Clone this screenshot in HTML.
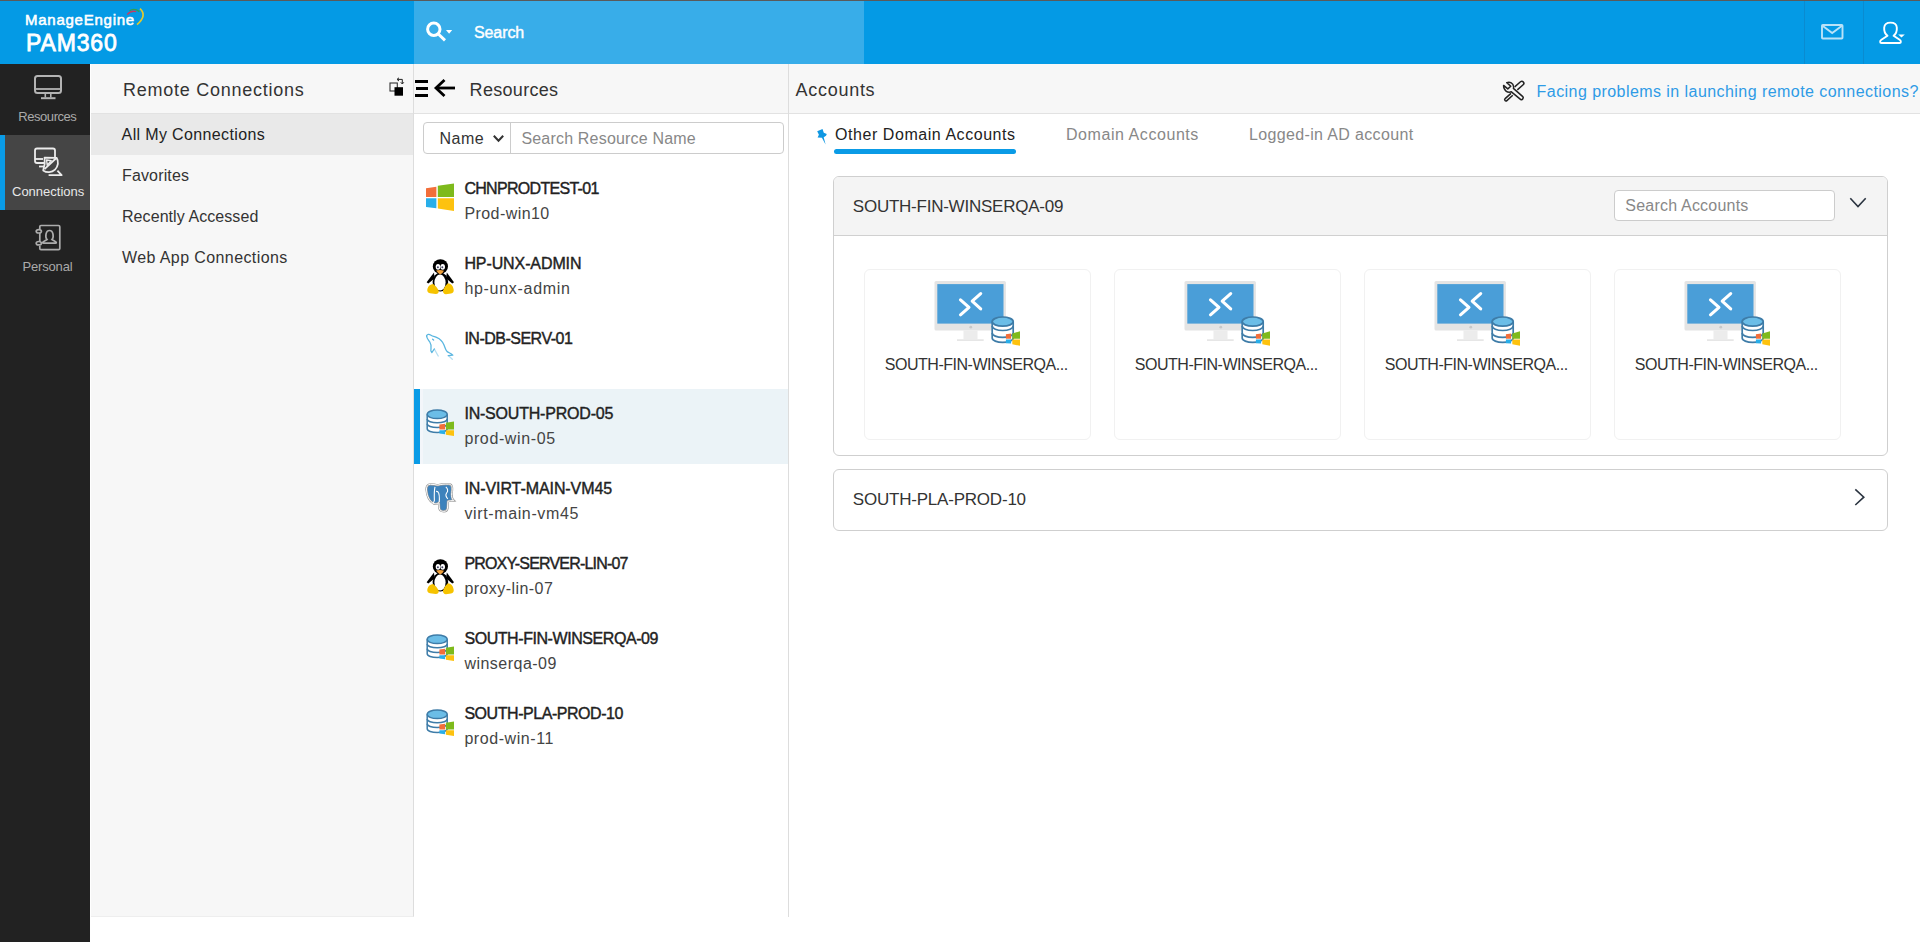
<!DOCTYPE html>
<html><head><meta charset="utf-8">
<style>
*{margin:0;padding:0;box-sizing:border-box}
html,body{width:1920px;height:942px;overflow:hidden;background:#fff;font-family:"Liberation Sans",sans-serif}
.a{position:absolute}
.t{position:absolute;white-space:nowrap;line-height:1;color:#333}
.sb{-webkit-text-stroke:0.4px currentColor}
svg{position:absolute;overflow:visible}
</style></head><body>
<!-- top line + header -->
<div class="a" style="left:0;top:0;width:1920px;height:1px;background:#5a5a5a"></div>
<div class="a" style="left:0;top:1px;width:1920px;height:63px;background:#049ae5"></div>
<div class="a" style="left:414px;top:1px;width:450px;height:63px;background:#38ade9"></div>
<div class="a" style="left:1804px;top:1px;width:1px;height:63px;background:#0a8bd0"></div>
<div class="a" style="left:1863px;top:1px;width:1px;height:63px;background:#0a8bd0"></div>
<div class="t" style="left:25px;top:12px;font-size:15px;color:#fff;letter-spacing:0.75px;-webkit-text-stroke:0.55px #fff">ManageEngine</div>
<div class="t" style="left:26px;top:31.5px;font-size:23px;color:#fff;letter-spacing:0.85px;-webkit-text-stroke:0.8px #fff">PAM360</div>
<div class="t sb" style="left:474px;top:25.2px;font-size:16px;color:#fff;letter-spacing:-0.1px">Search</div>

<!-- sidebar -->
<div class="a" style="left:0;top:64px;width:90px;height:878px;background:#222"></div>
<div class="a" style="left:0;top:135px;width:90px;height:75px;background:#454545"></div>
<div class="a" style="left:0;top:135px;width:5px;height:75px;background:#0a9be6"></div>
<div class="t" style="left:18.3px;top:110px;font-size:13px;color:#aaa;letter-spacing:-0.45px">Resources</div>
<div class="t" style="left:12px;top:185px;font-size:13px;color:#e8e8e8;letter-spacing:0px">Connections</div>
<div class="t" style="left:22.6px;top:259.7px;font-size:13px;color:#aaa;letter-spacing:-0.19px">Personal</div>

<!-- left nav panel -->
<div class="a" style="left:91px;top:64px;width:323px;height:853px;background:#f7f7f7;border-right:1px solid #ddd;border-bottom:1px solid #eee"></div>
<div class="a" style="left:91px;top:113px;width:322px;height:1px;background:#e2e2e2"></div>
<div class="a" style="left:91px;top:114px;width:322px;height:41px;background:#e9e9e9"></div>
<div class="t" style="left:123px;top:80.6px;font-size:18px;letter-spacing:0.74px">Remote Connections</div>
<div class="t" style="left:121.6px;top:127.2px;font-size:16px;color:#222;letter-spacing:0.36px">All My Connections</div>
<div class="t" style="left:122px;top:168.2px;font-size:16px;letter-spacing:0.15px">Favorites</div>
<div class="t" style="left:122px;top:209.2px;font-size:16px;letter-spacing:0.07px">Recently Accessed</div>
<div class="t" style="left:122px;top:249.9px;font-size:16px;letter-spacing:0.4px">Web App Connections</div>

<!-- resources panel -->
<div class="a" style="left:414px;top:64px;width:375px;height:853px;background:#fff;border-right:1px solid #ddd"></div>
<div class="a" style="left:414px;top:64px;width:374px;height:50px;background:#f7f7f7;border-bottom:1px solid #e2e2e2"></div>
<div class="t" style="left:469.6px;top:80.5px;font-size:18px;letter-spacing:0.31px">Resources</div>
<div class="a" style="left:423px;top:122px;width:361px;height:32px;border:1px solid #ccc;border-radius:4px;background:#fff"></div>
<div class="a" style="left:510px;top:123px;width:1px;height:30px;background:#ccc"></div>
<div class="t" style="left:439.4px;top:130.9px;font-size:16px;letter-spacing:0.54px">Name</div>
<div class="t" style="left:521.4px;top:130.9px;font-size:16px;color:#888;letter-spacing:0.19px">Search Resource Name</div>

<div class="a" style="left:414px;top:389px;width:374px;height:75px;background:#ebf3f7"></div>
<div class="a" style="left:420px;top:389px;width:3px;height:75px;background:#f3f6fa"></div>
<div class="a" style="left:414px;top:389px;width:6px;height:75px;background:#0a9be6"></div>

<div class="t sb" style="left:464.4px;top:180.6px;font-size:16px;color:#222;letter-spacing:-0.7px">CHNPRODTEST-01</div>
<div class="t" style="left:464.4px;top:206.0px;font-size:16px;color:#444;letter-spacing:0.43px">Prod-win10</div>
<div class="t sb" style="left:464.4px;top:255.6px;font-size:16px;color:#222;letter-spacing:-0.1px">HP-UNX-ADMIN</div>
<div class="t" style="left:464.4px;top:281.0px;font-size:16px;color:#444;letter-spacing:0.7px">hp-unx-admin</div>
<div class="t sb" style="left:464.4px;top:330.6px;font-size:16px;color:#222;letter-spacing:-0.5px">IN-DB-SERV-01</div>
<div class="t sb" style="left:464.4px;top:405.6px;font-size:16px;color:#222;letter-spacing:-0.2px">IN-SOUTH-PROD-05</div>
<div class="t" style="left:464.4px;top:431.0px;font-size:16px;color:#444;letter-spacing:0.62px">prod-win-05</div>
<div class="t sb" style="left:464.4px;top:480.6px;font-size:16px;color:#222;letter-spacing:-0.08px">IN-VIRT-MAIN-VM45</div>
<div class="t" style="left:464.4px;top:506.0px;font-size:16px;color:#444;letter-spacing:0.63px">virt-main-vm45</div>
<div class="t sb" style="left:464.4px;top:555.6px;font-size:16px;color:#222;letter-spacing:-0.82px">PROXY-SERVER-LIN-07</div>
<div class="t" style="left:464.4px;top:581.0px;font-size:16px;color:#444;letter-spacing:0.44px">proxy-lin-07</div>
<div class="t sb" style="left:464.4px;top:630.6px;font-size:16px;color:#222;letter-spacing:-0.43px">SOUTH-FIN-WINSERQA-09</div>
<div class="t" style="left:464.4px;top:656.0px;font-size:16px;color:#444;letter-spacing:0.48px">winserqa-09</div>
<div class="t sb" style="left:464.4px;top:705.6px;font-size:16px;color:#222;letter-spacing:-0.45px">SOUTH-PLA-PROD-10</div>
<div class="t" style="left:464.4px;top:731.0px;font-size:16px;color:#444;letter-spacing:0.57px">prod-win-11</div>

<!-- accounts panel -->
<div class="a" style="left:789px;top:64px;width:1131px;height:50px;background:#f7f7f7;border-bottom:1px solid #e2e2e2"></div>
<div class="t" style="left:795.6px;top:80.6px;font-size:18px;letter-spacing:0.71px">Accounts</div>
<div class="t" style="left:1536.6px;top:84px;font-size:16px;color:#2e9be6;letter-spacing:0.44px">Facing problems in launching remote connections?</div>

<div class="t" style="left:835.1px;top:127px;font-size:16px;color:#222;letter-spacing:0.55px">Other Domain Accounts</div>
<div class="a" style="left:834px;top:149px;width:182px;height:5px;background:#0a9be6;border-radius:3px"></div>
<div class="t" style="left:1066px;top:127px;font-size:16px;color:#888;letter-spacing:0.56px">Domain Accounts</div>
<div class="t" style="left:1249px;top:127px;font-size:16px;color:#888;letter-spacing:0.35px">Logged-in AD account</div>

<!-- card 1 -->
<div class="a" style="left:833px;top:176px;width:1055px;height:280px;border:1px solid #cfcfcf;border-radius:6px;background:#fff;overflow:hidden">
  <div class="a" style="left:0;top:0;width:1053px;height:59px;background:#f4f4f4;border-bottom:1px solid #d0d0d0"></div>
</div>
<div class="t" style="left:852.8px;top:198.1px;font-size:17px;letter-spacing:-0.24px">SOUTH-FIN-WINSERQA-09</div>
<div class="a" style="left:1614px;top:190px;width:221px;height:31px;border:1px solid #ccc;border-radius:4px;background:#fff"></div>
<div class="t" style="left:1625.3px;top:197.5px;font-size:16px;color:#888;letter-spacing:0.21px">Search Accounts</div>

<div class="a" style="left:864px;top:269px;width:227px;height:171px;border:1px solid #f1f1f1;border-radius:6px"></div>
<div class="a" style="left:1114px;top:269px;width:227px;height:171px;border:1px solid #f1f1f1;border-radius:6px"></div>
<div class="a" style="left:1364px;top:269px;width:227px;height:171px;border:1px solid #f1f1f1;border-radius:6px"></div>
<div class="a" style="left:1614px;top:269px;width:227px;height:171px;border:1px solid #f1f1f1;border-radius:6px"></div>
<div class="t" style="left:884.8px;top:356.6px;font-size:16px;letter-spacing:-0.48px">SOUTH-FIN-WINSERQA...</div>
<div class="t" style="left:1134.8px;top:356.6px;font-size:16px;letter-spacing:-0.48px">SOUTH-FIN-WINSERQA...</div>
<div class="t" style="left:1384.8px;top:356.6px;font-size:16px;letter-spacing:-0.48px">SOUTH-FIN-WINSERQA...</div>
<div class="t" style="left:1634.8px;top:356.6px;font-size:16px;letter-spacing:-0.48px">SOUTH-FIN-WINSERQA...</div>

<!-- card 2 -->
<div class="a" style="left:833px;top:469px;width:1055px;height:62px;border:1px solid #cfcfcf;border-radius:6px;background:#fff"></div>
<div class="t" style="left:852.8px;top:491px;font-size:17px;letter-spacing:-0.21px">SOUTH-PLA-PROD-10</div>

<!-- logo swirl -->
<svg style="left:0;top:0" width="1" height="1">
  <path d="M140 8.6 Q147.5 15.5 137 24.6" fill="none" stroke="#e2c92e" stroke-width="1.7"/>
  <path d="M129.6 10.9 Q134 7.6 139.4 11.6" fill="none" stroke="#2e9f55" stroke-width="1.4"/>
  <path d="M127.3 14.6 Q130.6 10.3 136.2 11.6" fill="none" stroke="#c43d63" stroke-width="1.4"/>
</svg>
<!-- search icon -->
<svg style="left:0;top:0" width="1" height="1">
  <circle cx="433.8" cy="29.2" r="6.2" fill="none" stroke="#fff" stroke-width="3"/>
  <line x1="437.8" y1="33.5" x2="445" y2="40.3" stroke="#fff" stroke-width="3"/>
  <path d="M446 30 L452.2 30 L449.1 33.8 Z" fill="#fff"/>
</svg>
<!-- mail icon -->
<svg style="left:0;top:0" width="1" height="1">
  <rect x="1822" y="25" width="20.5" height="13.5" rx="0.8" fill="none" stroke="#b9e2f8" stroke-width="1.9"/>
  <path d="M1822.5 25.8 L1832.2 33 L1842 25.8" fill="none" stroke="#b9e2f8" stroke-width="1.9"/>
</svg>
<!-- user icon -->
<svg style="left:0;top:0" width="1" height="1">
  <path d="M1887.5 35.8 C1884.5 33.5 1884 30 1884.2 27.5 C1884.5 24.5 1887 22.6 1890.5 22.6 C1894 22.6 1896.6 24.5 1896.8 27.5 C1897 30 1896.5 33.5 1893.6 35.8 L1899.6 39.8 C1901.4 41 1901.2 43 1899.5 43 L1881.5 43 C1879.8 43 1879.6 41 1881.4 39.8 Z" fill="none" stroke="#fff" stroke-width="1.9" stroke-linejoin="round"/>
  <path d="M1898.2 34.6 L1904.8 34.6 L1901.5 37.6 Z" fill="#fff"/>
</svg>
<!-- sidebar: monitor -->
<svg style="left:0;top:0" width="1" height="1">
  <rect x="35" y="76" width="26" height="17" rx="2.5" fill="none" stroke="#b4b4b4" stroke-width="2"/>
  <line x1="35" y1="89" x2="61" y2="89" stroke="#b4b4b4" stroke-width="1.8"/>
  <line x1="45.3" y1="94" x2="45.3" y2="97.5" stroke="#b4b4b4" stroke-width="1.6"/>
  <line x1="50.8" y1="94" x2="50.8" y2="97.5" stroke="#b4b4b4" stroke-width="1.6"/>
  <line x1="41" y1="98.2" x2="55.5" y2="98.2" stroke="#b4b4b4" stroke-width="2"/>
</svg>
<!-- sidebar: connections -->
<svg style="left:0;top:0" width="1" height="1" fill="none" stroke="#ececec" stroke-width="1.8" stroke-linejoin="round">
  <path d="M44 163 L37 163 Q35 163 35 161 L35 150.5 Q35 148.5 37 148.5 L53 148.5 Q55 148.5 55 150.5 L55 157"/>
  <line x1="35" y1="159" x2="43" y2="159"/>
  <line x1="39" y1="166.5" x2="44" y2="166.5"/>
  <path d="M44.6 157.6 L56.6 157.8 A 9.4 9.4 0 0 1 43.2 170.4 Q45.5 164 44.6 157.6 Z"/>
  <line x1="44.5" y1="169.2" x2="56.4" y2="158"/>
  <path d="M46.6 160 L51.2 160.8 L47.2 165.2 Z" stroke-width="1.4"/>
  <path d="M48.6 175.2 L61.6 175.2 L57.4 170.6"/>
</svg>
<!-- sidebar: personal -->
<svg style="left:0;top:0" width="1" height="1" fill="none" stroke="#acacac" stroke-width="1.7">
  <path d="M39.8 229 L39.8 226.5 Q39.8 225.5 41 225.5 L58.5 225.5 Q59.8 225.5 59.8 226.8 L59.8 248.5 Q59.8 249.7 58.5 249.7 L41 249.7 Q39.8 249.7 39.8 248.5 L39.8 246"/>
  <ellipse cx="38.8" cy="231.3" rx="2.6" ry="1.7"/>
  <ellipse cx="38.8" cy="243.2" rx="2.6" ry="1.7"/>
  <line x1="39.8" y1="233" x2="39.8" y2="241.5"/>
  <path d="M47 239.5 C45 237.5 45.5 230.5 49.5 230.5 C53.5 230.5 54 237.5 52 239.5 L55.8 241.8 Q57 243.2 55.5 243.2 L43.5 243.2 Q42 243.2 43.2 241.8 Z"/>
</svg>

<!-- resources header icons -->
<svg style="left:384px;top:72px" width="1" height="1">
  <rect x="6" y="11" width="7.3" height="8" fill="none" stroke="#333" stroke-width="1.1"/>
  <rect x="10.5" y="15.2" width="8.5" height="8.5" fill="#000"/>
  <path d="M13.5 7.4 L18.3 7.4 L18.3 11.5" fill="none" stroke="#222" stroke-width="1"/>
  <path d="M13 7.4 L15 5.8 M13 7.4 L15 9" fill="none" stroke="#222" stroke-width="1"/>
  <path d="M18.3 12 L16.8 10.3 M18.3 12 L19.8 10.3" fill="none" stroke="#222" stroke-width="1"/>
</svg>
<div class="a" style="left:415.3px;top:80.1px;width:12.4px;height:2.7px;background:#000"></div>
<div class="a" style="left:416.3px;top:86.8px;width:11.4px;height:2.8px;background:#000"></div>
<div class="a" style="left:415.3px;top:93.9px;width:12.4px;height:2.7px;background:#000"></div>
<svg style="left:0;top:0" width="1" height="1">
  <path d="M436 88 L455 88" stroke="#000" stroke-width="2.8"/>
  <path d="M444.5 80 L436 88 L444.5 96" fill="none" stroke="#000" stroke-width="2.8"/>
</svg>
<!-- name select chevron -->
<svg style="left:0;top:0" width="1" height="1">
  <path d="M493.8 135.8 L498.5 140.8 L503.2 135.8" fill="none" stroke="#333" stroke-width="2"/>
</svg>
<!-- windows logo row1 -->
<svg style="left:0;top:0" width="1" height="1">
  <path d="M426 188.2 L436.4 186.8 L436.4 196.9 L426 196.9 Z" fill="#f26e3a"/>
  <path d="M437.8 185.8 L454 183.6 L454 196.9 L437.8 196.9 Z" fill="#7eba1c"/>
  <path d="M426 198.2 L436.4 198.2 L436.4 208.2 L426 207 Z" fill="#28aee9"/>
  <path d="M437.8 198.2 L454 198.2 L454 211 L437.8 208.6 Z" fill="#fdc20f"/>
</svg>
<!-- tux rows 2 & 6 -->
<svg style="left:420px;top:252px" width="1" height="1" id="tux">
  <path d="M14 20.5 L6.6 30.3 L8.3 31.4 L14.5 26.5 Z" fill="#000"/>
  <path d="M26.8 20.5 L34 30.3 L32.3 31.4 L26.2 26.5 Z" fill="#000"/>
  <ellipse cx="20.4" cy="14.6" rx="7.6" ry="7.4" fill="#000"/>
  <ellipse cx="20.4" cy="30" rx="7.8" ry="9.6" fill="#000"/>
  <ellipse cx="20" cy="30.6" rx="5.6" ry="8" fill="#fff"/>
  <ellipse cx="18" cy="14.8" rx="2.3" ry="2.9" fill="#fff"/>
  <ellipse cx="22.7" cy="14.8" rx="2.3" ry="2.9" fill="#fff"/>
  <circle cx="17.9" cy="15.2" r="1" fill="#446"/>
  <circle cx="22.3" cy="15.2" r="1" fill="#446"/>
  <path d="M16.2 18.6 Q20.2 17.2 24 18.8 Q22.5 21.8 20.3 22.4 Q18 21.6 16.2 18.6 Z" fill="#f0a03a"/>
  <path d="M7.4 37 Q8.5 32.4 13.2 32 Q16 34 18.6 38.2 Q19.4 41.6 15.6 42 L10 41.3 Q6.6 40.3 7.4 37 Z" fill="#f6c300"/>
  <path d="M33.6 37.2 Q32.6 31.8 27.8 31.2 Q24.8 33.5 23 38.3 Q22.6 42 26 42.3 L31 41.6 Q34.4 40.6 33.6 37.2 Z" fill="#f6c300"/>
</svg>
<svg style="left:420px;top:552px" width="1" height="1">
  <path d="M14 20.5 L6.6 30.3 L8.3 31.4 L14.5 26.5 Z" fill="#000"/>
  <path d="M26.8 20.5 L34 30.3 L32.3 31.4 L26.2 26.5 Z" fill="#000"/>
  <ellipse cx="20.4" cy="14.6" rx="7.6" ry="7.4" fill="#000"/>
  <ellipse cx="20.4" cy="30" rx="7.8" ry="9.6" fill="#000"/>
  <ellipse cx="20" cy="30.6" rx="5.6" ry="8" fill="#fff"/>
  <ellipse cx="18" cy="14.8" rx="2.3" ry="2.9" fill="#fff"/>
  <ellipse cx="22.7" cy="14.8" rx="2.3" ry="2.9" fill="#fff"/>
  <circle cx="17.9" cy="15.2" r="1" fill="#446"/>
  <circle cx="22.3" cy="15.2" r="1" fill="#446"/>
  <path d="M16.2 18.6 Q20.2 17.2 24 18.8 Q22.5 21.8 20.3 22.4 Q18 21.6 16.2 18.6 Z" fill="#f0a03a"/>
  <path d="M7.4 37 Q8.5 32.4 13.2 32 Q16 34 18.6 38.2 Q19.4 41.6 15.6 42 L10 41.3 Q6.6 40.3 7.4 37 Z" fill="#f6c300"/>
  <path d="M33.6 37.2 Q32.6 31.8 27.8 31.2 Q24.8 33.5 23 38.3 Q22.6 42 26 42.3 L31 41.6 Q34.4 40.6 33.6 37.2 Z" fill="#f6c300"/>
</svg>
<!-- dolphin row3 -->
<svg style="left:420px;top:328px" width="1" height="1" fill="none" stroke="#5ab6e0" stroke-width="1.3" stroke-linecap="round" stroke-linejoin="round">
  <path d="M6.6 8 C7 6.2 9 6 11 7.2 C12.5 8.2 14.5 8.6 17 9.6 C20.5 11 22.5 13.5 24 17 C25.2 20 25.6 22.5 27.2 23.6 C29 24.8 31.2 25.4 32.8 27.2 L28.3 27.6"/>
  <path d="M28.3 27.6 L32.3 31.2" stroke-opacity="0.45"/>
  <path d="M6.6 8 C6.8 10.5 8.5 12 9.8 14 C11 16 11.4 17.5 11 20 C10.6 22 11 23.8 11.8 24.6 L14.3 21"/>
  <path d="M14.3 21 L18.2 28" stroke-opacity="0.45"/>
  <path d="M12.6 11.2 L13.6 12"/>
</svg>
<!-- db+win icon (list) -->
<svg style="left:0;top:0;width:0;height:0">
  <defs>
    <g id="dbw">
      <path d="M7.2 12.3 L7.2 26.8 A10 3.8 0 0 0 27.2 26.8 L27.2 12.3" fill="#fff" stroke="#3e7ca8" stroke-width="1.5"/>
      <path d="M7.2 17 A10 3.8 0 0 0 27.2 17" fill="none" stroke="#3e7ca8" stroke-width="1.5"/>
      <path d="M7.2 21.8 A10 3.8 0 0 0 27.2 21.8" fill="none" stroke="#3e7ca8" stroke-width="1.5"/>
      <ellipse cx="17.2" cy="12.3" rx="10" ry="4.3" fill="#6bbde7" stroke="#3e7ca8" stroke-width="1.5"/>
      <path d="M19.4 22.6 L25.1 21.8 L25.1 27.6 L19.4 27.6 Z" fill="#f26e3a"/>
      <path d="M25.9 20.8 L34 19.6 L34 27.6 L25.9 27.6 Z" fill="#7eba1c"/>
      <path d="M19.4 28.2 L25.1 28.2 L25.1 32.2 L19.4 31.6 Z" fill="#28aee9"/>
      <path d="M25.9 28.2 L34 28.2 L34 34 L25.9 32.8 Z" fill="#fdc20f"/>
    </g>
  </defs>
</svg>
<svg style="left:420px;top:402px" width="1" height="1"><use href="#dbw"/></svg>
<svg style="left:420px;top:627px" width="1" height="1"><use href="#dbw"/></svg>
<svg style="left:420px;top:702px" width="1" height="1"><use href="#dbw"/></svg>
<!-- elephant row5 -->
<svg style="left:420px;top:478px" width="1" height="1">
  <defs><path id="eleph" d="M10.5 6.3 C7.6 6.3 6.2 8.6 6.5 12 C7 17.5 9.3 23.5 13.8 25.6 C15.8 26.3 17.6 25.5 18.9 24.6 L19.3 30 C19.6 32.8 21.8 33.4 23.8 33.4 C26.4 33.4 27.6 31.8 27.6 29 L27.9 23.2 C29.5 22.6 31.6 22.8 33.8 22.6 C32 21 31.2 19 31.8 14.5 C32.6 9.5 32.2 6.2 28.5 6.1 C25 5.9 21 6.2 17.6 7.2 C15.2 6.5 13 6.3 10.5 6.3 Z"/></defs>
  <use href="#eleph" fill="#3d82bc" stroke="#9a9a9a" stroke-width="2.2"/>
  <use href="#eleph" fill="none" stroke="#fff" stroke-width="1.0"/>
  <path d="M15 8.8 C14.2 12 14.2 18 14.4 22.4 C14.1 23.8 13.6 24.6 12.8 25.2" fill="none" stroke="#fff" stroke-width="1.1"/>
  <path d="M16.1 13.4 C18.6 13 19.4 16 19.4 21 L19.2 24" fill="none" stroke="#fff" stroke-width="1.1"/>
  <path d="M25.8 8.9 C27.8 10.5 28.4 13 26.6 15 C25.6 16.4 25.6 18.5 27.8 21" fill="none" stroke="#fff" stroke-width="1.1"/>
</svg>
<!-- pin icon -->
<svg style="left:810px;top:124px" width="1" height="1">
  <path d="M7.2 7.2 L12.5 5 L13.8 8.8 L16.8 10 L16 11.8 L13.7 13.3 L15.6 20.5 L11.9 13.7 L7.6 13.6 L8.9 10.8 Z" fill="#0f97e2"/>
</svg>
<!-- tools icon -->
<svg style="left:1498px;top:76px" width="1" height="1" fill="none" stroke="#222" stroke-width="1.5" stroke-linejoin="round">
  <path d="M8.8 6.6 C12 5.6 15.2 7 15.6 10.6 C15.7 11.4 15.6 12 15.4 12.4 L24.8 20.6 C26 21.8 24.4 24.2 22.8 23.6 L13.4 15.8 C9.6 17.2 5.4 14.5 5.6 9.4 L9.8 12.9 L12.8 10.3 Z"/>
  <path d="M16.68 10.9 L22.5 5.8 A2 2 0 0 1 25.15 8.8 L19.32 13.9"/>
  <path d="M13.03 17.33 L7.13 22.63 A1.3 1.3 0 0 0 8.87 24.57 L14.77 19.27"/>
</svg>
<!-- card chevrons -->
<svg style="left:0;top:0" width="1" height="1">
  <path d="M1850.3 198.3 L1858 206.5 L1865.7 198.3" fill="none" stroke="#2b3440" stroke-width="1.6"/>
  <path d="M1855.3 489.3 L1863.8 497.2 L1855.3 505" fill="none" stroke="#2b3440" stroke-width="1.6"/>
</svg>
<!-- tile icons -->
<svg style="left:0;top:0;width:0;height:0">
  <defs>
    <g id="tic">
      <rect x="6.5" y="6.9" width="71.4" height="49.6" rx="1.5" fill="#e4e4e4"/>
      <rect x="9.3" y="10.1" width="66.2" height="39.5" fill="#4a9ed8"/>
      <circle cx="42.8" cy="53.2" r="1.4" fill="#c9c9c9"/>
      <rect x="35.5" y="56.5" width="14" height="8.6" fill="#ececec"/>
      <rect x="29" y="65.4" width="26.7" height="1.4" fill="#e0e0e0"/>
      <path d="M32.5 25.8 L41 33.3 L32.5 40.8" fill="none" stroke="#fff" stroke-width="3.1" stroke-linecap="round" stroke-linejoin="round"/>
      <path d="M52.7 19.6 L44.2 27.2 L52.7 34.9" fill="none" stroke="#fff" stroke-width="3.1" stroke-linecap="round" stroke-linejoin="round"/>
      <path d="M64.2 47.6 L64.2 64 A10.5 4.4 0 0 0 85.2 64 L85.2 47.6" fill="#fff" stroke="#3e7ca8" stroke-width="1.7"/>
      <path d="M64.2 52.1 A10.5 4.4 0 0 0 85.2 52.1" fill="none" stroke="#3e7ca8" stroke-width="1.7"/>
      <path d="M64.2 59 A10.5 4.4 0 0 0 85.2 59" fill="none" stroke="#3e7ca8" stroke-width="1.7"/>
      <ellipse cx="74.7" cy="47.6" rx="10.5" ry="4.6" fill="#6bbde7" stroke="#3e7ca8" stroke-width="1.7"/>
      <path d="M77.9 60.3 L83.1 59.6 L83.1 64.7 L77.9 64.7 Z" fill="#f26e3a"/>
      <path d="M84.3 59.4 L92 57.3 L92 64.7 L84.3 64.7 Z" fill="#7eba1c"/>
      <path d="M77.9 65.4 L83.1 65.4 L83.1 69.6 L77.9 69.2 Z" fill="#28aee9"/>
      <path d="M84.3 65.4 L92 65.4 L92 71.8 L84.3 70.2 Z" fill="#fdc20f"/>
    </g>
  </defs>
</svg>
<svg style="left:928px;top:274px" width="1" height="1"><use href="#tic"/></svg>
<svg style="left:1178px;top:274px" width="1" height="1"><use href="#tic"/></svg>
<svg style="left:1428px;top:274px" width="1" height="1"><use href="#tic"/></svg>
<svg style="left:1678px;top:274px" width="1" height="1"><use href="#tic"/></svg>

<!--ICONS-->
</body></html>
